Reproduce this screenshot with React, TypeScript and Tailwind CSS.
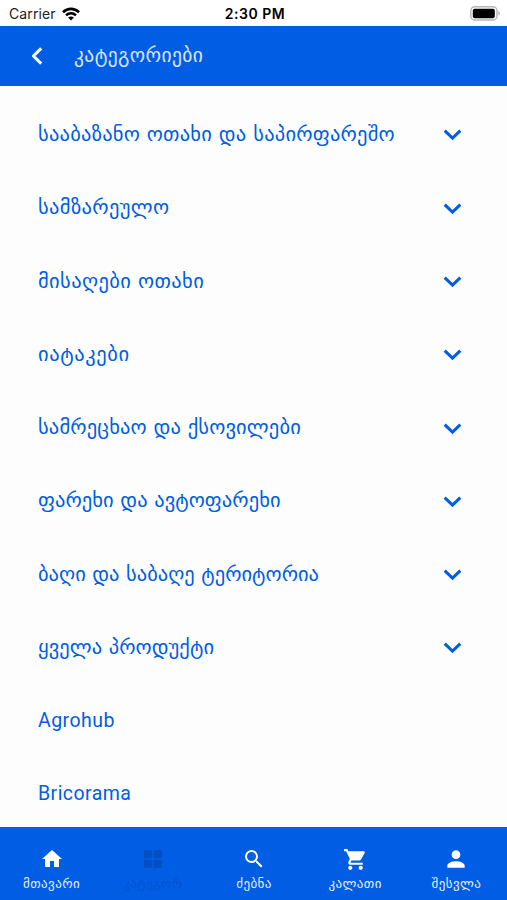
import React from 'react';
import { MdHome, MdSearch, MdShoppingCart, MdPerson } from 'react-icons/md';
import clsx from 'clsx';

interface Category {
  name: string;
  className: string;
  expandable: boolean;
}

interface Tab {
  label: string;
  icon: React.ReactNode;
  active?: boolean;
}

const BackIcon = () => (
  <svg width="12" height="18" viewBox="0 0 12 18" fill="none" stroke="currentColor" strokeWidth="3" strokeLinejoin="round">
    <path d="M10.2 1.4L2.4 9L10.2 16.6" />
  </svg>
);

const ChevronDownIcon = () => (
  <svg width="19" height="12" viewBox="0 0 19 12" fill="none" stroke="currentColor" strokeWidth="3">
    <path d="M1.7 1.7L9.5 9.2L17.3 1.7" />
  </svg>
);

const GridIcon = () => (
  <svg width="18" height="18" viewBox="0 0 18 18" fill="currentColor">
    <rect x="0" y="0" width="8.2" height="8.2" rx="1" />
    <rect x="9.8" y="0" width="8.2" height="8.2" rx="1" />
    <rect x="0" y="9.8" width="8.2" height="8.2" rx="1" />
    <rect x="9.8" y="9.8" width="8.2" height="8.2" rx="1" />
  </svg>
);

const WifiIcon = () => (
  <svg width="18" height="14" viewBox="0 0 18 14" fill="none" stroke="#000" strokeWidth="2.6">
    <path d="M1 5.2C5.6 0.8 12.4 0.8 17 5.2" />
    <path d="M4 8.4C6.9 5.7 11.1 5.7 14 8.4" />
    <path d="M9 13.5L6.1 10.6C7.8 9.2 10.2 9.2 11.9 10.6Z" fill="#000" stroke="none" />
  </svg>
);

const BatteryIcon = () => (
  <svg width="31" height="15" viewBox="0 0 31 15">
    <rect x="0.8" y="0.8" width="26.2" height="13.2" rx="4" fill="#fff" stroke="#b5b5b5" strokeWidth="1.4" />
    <rect x="2.8" y="2.8" width="22" height="9.4" rx="2" fill="#000" />
    <path d="M28.4 5.2C30.4 5.8 30.4 9 28.4 9.6Z" fill="#b5b5b5" />
  </svg>
);

const categories: Category[] = [
  { name: 'სააბაზანო ოთახი და საპირფარეშო', className: 'tracking-[0.22px]', expandable: true },
  { name: 'სამზარეულო', className: 'tracking-[0.35px]', expandable: true },
  { name: 'მისაღები ოთახი', className: 'tracking-[0.37px]', expandable: true },
  { name: 'იატაკები', className: 'tracking-[0.58px]', expandable: true },
  { name: 'სამრეცხაო და ქსოვილები', className: 'tracking-[0.15px]', expandable: true },
  { name: 'ფარეხი და ავტოფარეხი', className: 'tracking-[0.06px]', expandable: true },
  { name: 'ბაღი და საბაღე ტერიტორია', className: 'tracking-[0.01px]', expandable: true },
  { name: 'ყველა პროდუქტი', className: 'tracking-[0.07px]', expandable: true },
  { name: 'Agrohub', className: "font-['Roboto',sans-serif] text-[19.5px] tracking-[0.45px]", expandable: false },
  { name: 'Bricorama', className: "font-['Roboto',sans-serif] text-[19.5px] tracking-[0.45px]", expandable: false },
];

const tabs: Tab[] = [
  { label: 'მთავარი', icon: <MdHome size={24} /> },
  { label: 'კატეგორ', icon: <GridIcon />, active: true },
  { label: 'ძებნა', icon: <MdSearch size={24} /> },
  { label: 'კალათი', icon: <MdShoppingCart size={25} /> },
  { label: 'შესვლა', icon: <MdPerson size={26} /> },
];

export default function App() {
  return (
    <div className="flex h-[900px] w-[507px] flex-col overflow-hidden bg-[#fdfdfd] font-['DejaVu_Sans',sans-serif]">
      {/* Status bar */}
      <div className="grid h-[25.5px] shrink-0 grid-cols-3 items-center bg-white pt-[2px] pr-[6px] pl-[9px] font-['Inter',sans-serif] text-[14px] text-[#222]">
        <div className="flex items-center gap-[6px]">
          <span className="tracking-[0.1px]">Carrier</span>
          <WifiIcon />
        </div>
        <span className="text-center font-semibold tracking-[0.5px] text-black">2:30 PM</span>
        <div className="flex justify-end">
          <BatteryIcon />
        </div>
      </div>

      {/* Header */}
      <header className="flex h-[60.5px] shrink-0 items-center bg-[#005de4] pl-[31px] text-white">
        <BackIcon />
        <h1 className="ml-[31px] text-[19.5px] tracking-[0.4px] text-white/85">კატეგორიები</h1>
      </header>

      {/* Category list */}
      <main className="flex-1 overflow-hidden pt-[11.7px]">
        {categories.map((category) => (
          <div
            key={category.name}
            className="flex h-[73.3px] items-center justify-between pr-[45.5px] pl-[38px] text-[20.5px] text-[#005de4]"
          >
            <span className={clsx('whitespace-nowrap', category.className)}>{category.name}</span>
            {category.expandable && (
              <span className="pt-[2px]">
                <ChevronDownIcon />
              </span>
            )}
          </div>
        ))}
      </main>

      {/* Bottom tabs */}
      <nav className="grid h-[72.7px] shrink-0 grid-cols-5 bg-[#005de4] pt-[18.3px] pl-px">
        {tabs.map((tab) => (
          <div
            key={tab.label}
            className={clsx('flex flex-col items-center', tab.active ? 'text-[#004fc4]' : 'text-white')}
          >
            <div className="flex h-[27px] items-center">{tab.icon}</div>
            <span className={clsx('text-[13px] leading-[22px] tracking-[0.4px]', tab.active ? 'opacity-60' : 'opacity-90')}>
              {tab.label}
            </span>
          </div>
        ))}
      </nav>
    </div>
  );
}
